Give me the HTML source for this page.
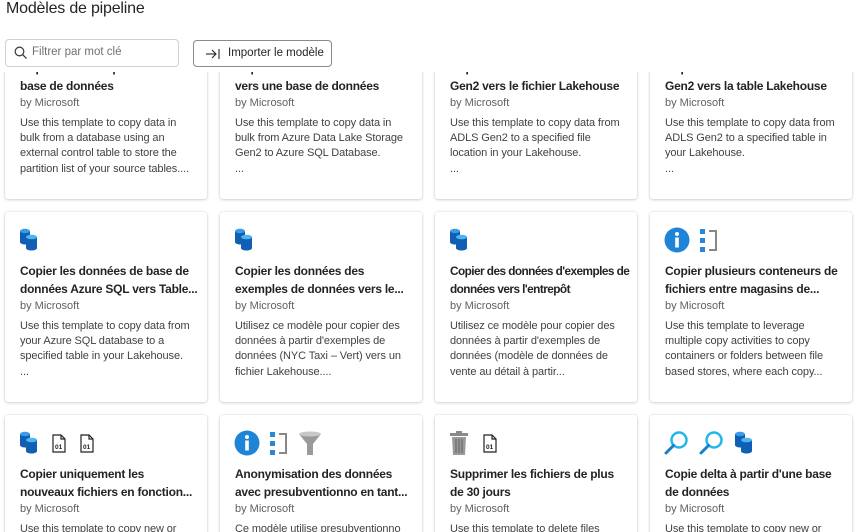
<!DOCTYPE html>
<html><head><meta charset="utf-8">
<style>
*{box-sizing:border-box;margin:0;padding:0}
body{width:857px;height:532px;overflow:hidden;background:#fff;font-family:"Segoe UI","Liberation Sans",sans-serif;color:#242424;position:relative}
h1{position:absolute;left:6px;top:0px;font-size:16px;font-weight:normal;color:#242424;letter-spacing:-0.2px}
.search{position:absolute;left:5px;top:39px;width:174px;height:28px;border:1px solid #d1d1d1;border-radius:4px;font-size:11.5px;color:#707070;padding:6px 0 0 26px}
.search svg{position:absolute;left:8px;top:6px}
.btn{position:absolute;left:193px;top:40px;width:139px;height:27px;border:1px solid #8a8a8a;border-radius:4px;font-size:11.5px;color:#242424;padding:6px 0 0 34px}
.btn svg{position:absolute;left:12px;top:7px}
.clip{position:absolute;left:0;top:72px;width:857px;height:460px;overflow:hidden}
.card{position:absolute;width:202px;height:190px;background:#fff;border-radius:3px;box-shadow:0 0 2px rgba(0,0,0,.14),0 1px 3px rgba(0,0,0,.14);padding:0 14px;overflow:hidden}
.ic{position:absolute;left:14px;top:14px;height:28px;display:flex;gap:8px;align-items:center}
.t{position:absolute;left:15px;top:50px;width:186px;height:36px;overflow:hidden;font-size:12px;line-height:18px;font-weight:600;color:#242424;letter-spacing:-0.25px;white-space:nowrap}
.by{position:absolute;left:15px;top:87px;font-size:11px;line-height:15px;color:#616161}
.d{position:absolute;left:15px;top:107px;width:186px;font-size:11px;line-height:15.2px;color:#424242;letter-spacing:-0.1px;height:61px;overflow:hidden;white-space:nowrap}
</style></head><body>
<h1>Modèles de pipeline</h1>
<div class="search"><svg width="14" height="14" viewBox="0 0 14 14"><circle cx="5.5" cy="5.5" r="4.3" fill="none" stroke="#424242" stroke-width="1.3"/><line x1="8.6" y1="8.6" x2="12.5" y2="12.5" stroke="#424242" stroke-width="1.3"/></svg>Filtrer par mot clé</div>
<div class="btn"><svg width="14" height="12" viewBox="0 0 14 12"><line x1="0" y1="6" x2="10" y2="6" stroke="#242424" stroke-width="1.1"/><polyline points="6,2 10,6 6,10" fill="none" stroke="#242424" stroke-width="1.1"/><line x1="13" y1="1" x2="13" y2="11" stroke="#242424" stroke-width="1.1"/></svg>Importer le modèle</div>

<svg width="0" height="0" style="position:absolute">
<defs>
<g id="db"><path d="M1 3v11c0 1.6 3 2.5 5 2.5s5-.9 5-2.5V3z" fill="#0f5fb5"/><ellipse cx="6" cy="3" rx="5" ry="2.2" fill="#3a9be8"/>
<path d="M7 9v11c0 1.6 3 2.5 5.5 2.5S18 21.6 18 20V9z" fill="#0f5fb5"/><ellipse cx="12.5" cy="9" rx="5.5" ry="2.3" fill="#50b4f0"/></g>
<g id="file"><path d="M1 1h8l4 4v13H1z" fill="#fff" stroke="#222" stroke-width="1.2"/><path d="M9 1v4h4" fill="none" stroke="#222" stroke-width="1.2"/><text x="3" y="15" font-size="6.5" font-family="Liberation Sans" font-weight="bold" fill="#222">01</text></g>
<g id="info"><circle cx="13" cy="13" r="12.5" fill="#1e84d8"/><circle cx="13" cy="7" r="2" fill="#fff"/><rect x="11.2" y="10.5" width="3.6" height="10" fill="#fff"/></g>
<g id="brk"><rect x="0" y="1" width="5" height="5" fill="#2a86d8"/><rect x="0" y="10" width="5" height="5" fill="#2a86d8"/><rect x="0" y="19" width="5" height="5" fill="#2a86d8"/><polyline points="9,3 16,3 16,22 9,22" fill="none" stroke="#888" stroke-width="2"/></g>
<g id="fun"><path d="M1 3h22l-8 10v11h-6V13z" fill="#9a9a9a"/><ellipse cx="12" cy="3" rx="11" ry="2.5" fill="#c8c8c8"/></g>
<g id="trash"><rect x="1" y="2" width="18" height="3" fill="#8a8a8a"/><rect x="7" y="0" width="6" height="2" fill="#8a8a8a"/><path d="M3 6h14l-1 18H4z" fill="#9a9a9a"/><path d="M7 8v14M10 8v14M13 8v14" stroke="#6a6a6a" stroke-width="1.2"/></g>
<g id="mag"><circle cx="15" cy="9" r="7.5" fill="none" stroke="#22b7e8" stroke-width="2.5"/><line x1="9.5" y1="14.5" x2="2" y2="22" stroke="#1a7fc8" stroke-width="3" stroke-linecap="round"/></g>
</defs></svg>

<div class="clip">
<div class="card" style="left:5px;top:-63px"><div class="t">Copier en bloc à partir d'une<br>base de données</div><div class="by">by Microsoft</div><div class="d">Use this template to copy data in<br>bulk from a database using an<br>external control table to store the<br>partition list of your source tables....</div></div>
<div class="card" style="left:220px;top:-63px"><div class="t">Copier en bloc d'ADLS Gen2<br>vers une base de données</div><div class="by">by Microsoft</div><div class="d">Use this template to copy data in<br>bulk from Azure Data Lake Storage<br>Gen2 to Azure SQL Database.<br>...</div></div>
<div class="card" style="left:435px;top:-63px"><div class="t">Copier les données d'ADLS<br>Gen2 vers le fichier Lakehouse</div><div class="by">by Microsoft</div><div class="d">Use this template to copy data from<br>ADLS Gen2 to a specified file<br>location in your Lakehouse.<br>...</div></div>
<div class="card" style="left:650px;top:-63px"><div class="t">Copier les données d'ADLS<br>Gen2 vers la table Lakehouse</div><div class="by">by Microsoft</div><div class="d">Use this template to copy data from<br>ADLS Gen2 to a specified table in<br>your Lakehouse.<br>...</div></div>

<div class="card" style="left:5px;top:140px"><div class="ic"><svg width="19" height="24"><use href="#db"/></svg></div><div class="t">Copier les données de base de<br>données Azure SQL vers Table...</div><div class="by">by Microsoft</div><div class="d">Use this template to copy data from<br>your Azure SQL database to a<br>specified table in your Lakehouse.<br>...</div></div>
<div class="card" style="left:220px;top:140px"><div class="ic"><svg width="19" height="24"><use href="#db"/></svg></div><div class="t">Copier les données des<br>exemples de données vers le...</div><div class="by">by Microsoft</div><div class="d">Utilisez ce modèle pour copier des<br>données à partir d'exemples de<br>données (NYC Taxi – Vert) vers un<br>fichier Lakehouse....</div></div>
<div class="card" style="left:435px;top:140px"><div class="ic"><svg width="19" height="24"><use href="#db"/></svg></div><div class="t" style="letter-spacing:-0.55px;font-size:11.8px">Copier des données d'exemples de<br>données vers l'entrepôt</div><div class="by">by Microsoft</div><div class="d">Utilisez ce modèle pour copier des<br>données à partir d'exemples de<br>données (modèle de données de<br>vente au détail à partir...</div></div>
<div class="card" style="left:650px;top:140px"><div class="ic" style="gap:10px"><svg width="26" height="26"><use href="#info"/></svg><svg width="18" height="25"><use href="#brk"/></svg></div><div class="t">Copier plusieurs conteneurs de<br>fichiers entre magasins de...</div><div class="by">by Microsoft</div><div class="d">Use this template to leverage<br>multiple copy activities to copy<br>containers or folders between file<br>based stores, where each copy...</div></div>

<div class="card" style="left:5px;top:343px"><div class="ic" style="gap:14px"><svg width="19" height="24"><use href="#db"/></svg><svg width="14" height="19"><use href="#file"/></svg><svg width="14" height="19"><use href="#file"/></svg></div><div class="t">Copier uniquement les<br>nouveaux fichiers en fonction...</div><div class="by">by Microsoft</div><div class="d">Use this template to copy new or</div></div>
<div class="card" style="left:220px;top:343px"><div class="ic" style="gap:10px"><svg width="26" height="26"><use href="#info"/></svg><svg width="18" height="25"><use href="#brk"/></svg><svg width="24" height="25"><use href="#fun"/></svg></div><div class="t">Anonymisation des données<br>avec presubventionno en tant...</div><div class="by">by Microsoft</div><div class="d">Ce modèle utilise presubventionno</div></div>
<div class="card" style="left:435px;top:343px"><div class="ic" style="gap:14px"><svg width="20" height="25"><use href="#trash"/></svg><svg width="14" height="19"><use href="#file"/></svg></div><div class="t">Supprimer les fichiers de plus<br>de 30 jours</div><div class="by">by Microsoft</div><div class="d">Use this template to delete files</div></div>
<div class="card" style="left:650px;top:343px"><div class="ic" style="gap:10px"><svg width="25" height="25"><use href="#mag"/></svg><svg width="25" height="25"><use href="#mag"/></svg><svg width="19" height="24"><use href="#db"/></svg></div><div class="t">Copie delta à partir d'une base<br>de données</div><div class="by">by Microsoft</div><div class="d">Use this template to copy new or</div></div>
</div>
</body></html>
